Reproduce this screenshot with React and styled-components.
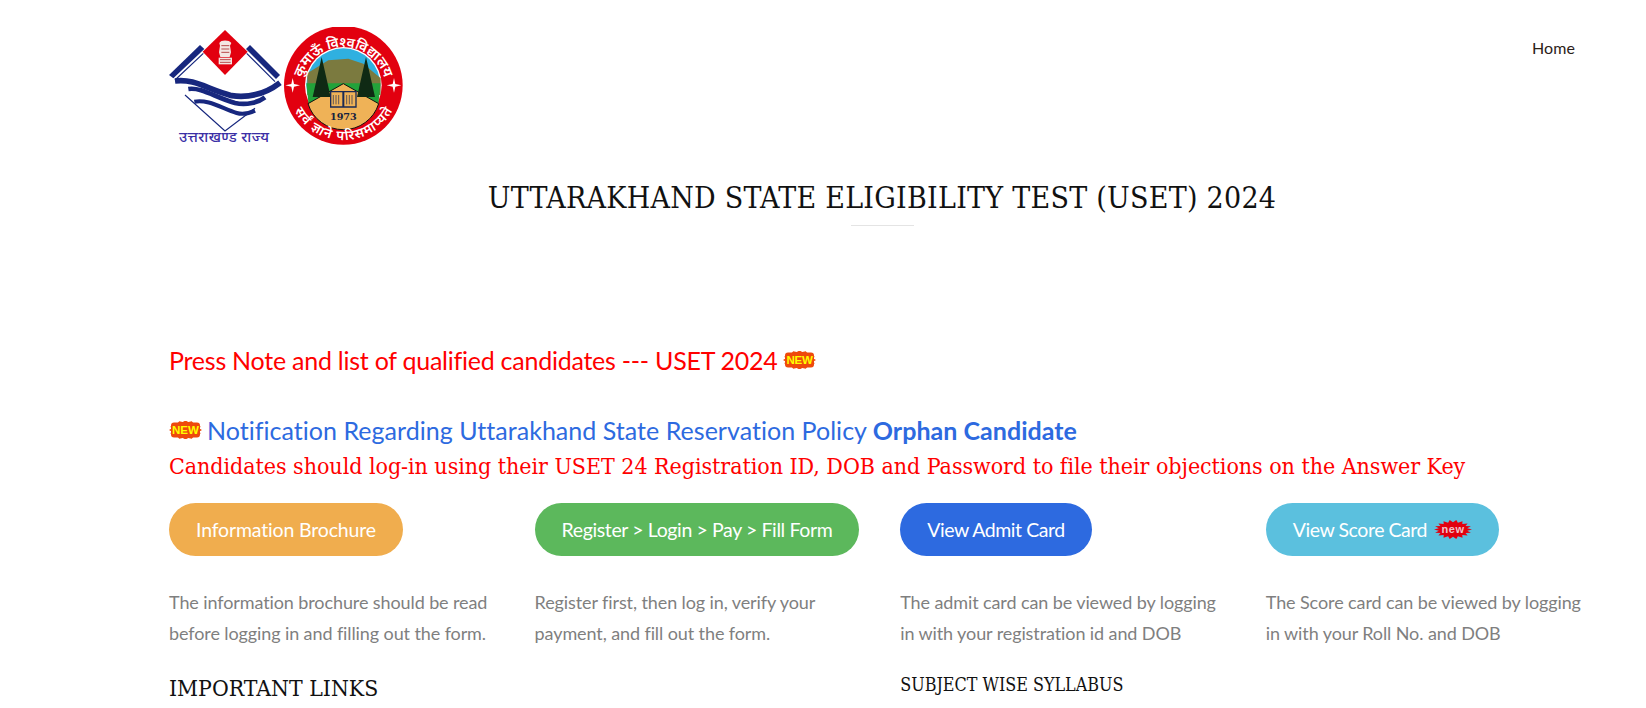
import React from 'react';
import styled, { createGlobalStyle } from 'styled-components';

const GlobalStyle = createGlobalStyle`
html, body { margin: 0; padding: 0; background: #fff; overflow: hidden; }
body { font-family: Lato, "Noto Sans", sans-serif; }
`;

const SLAB = '"DejaVu Serif Condensed", "DejaVu Serif", serif';

const Page = styled.div`
  width: 1646px;
  height: 708px;
  box-sizing: border-box;
  padding-left: 169px;
  overflow: hidden;
`;

const Header = styled.header`
  display: flex;
  justify-content: space-between;
  align-items: flex-start;
  height: 146px;
  padding: 27px 71px 0 0;
  box-sizing: border-box;
`;

const NavLink = styled.a`
  margin-top: 10px;
  font-size: 16px;
  line-height: 22px;
  letter-spacing: 0.1px;
  color: #2b2118;
`;

const TitleBlock = styled.div`
  width: 1426px;
  margin-top: 34px;
  text-align: center;
`;

const Title = styled.h2`
  margin: 0;
  font: 400 30px/36px ${SLAB};
  color: #111;
  letter-spacing: 0.25px;
`;

const Rule = styled.div`
  width: 63px;
  height: 1px;
  margin: 9px auto 0;
  background: #e4e4e4;
`;

const Notice = styled.p`
  display: flex;
  align-items: center;
  gap: 5px;
  margin: ${p => p.$top}px 0 0;
  font-size: 25px;
  line-height: 36px;
  letter-spacing: ${p => p.$track}px;
  color: ${p => p.$color};
`;

const SlabNotice = styled.p`
  margin: 0;
  font: 400 23px/36px ${SLAB};
  letter-spacing: -0.05px;
  white-space: nowrap;
  color: #f00;
`;

const Columns = styled.div`
  display: grid;
  grid-template-columns: repeat(4, 365.6px);
  margin-top: 19px;
`;

const Column = styled.div`
  padding-right: 36px;
`;

const Button = styled.a`
  display: inline-flex;
  align-items: center;
  gap: 7px;
  height: 53px;
  padding: 0 27px;
  border-radius: 27px;
  font-size: 19.5px;
  letter-spacing: ${p => p.$track ?? -0.45}px;
  white-space: nowrap;
  color: #fff;
  background: ${p => p.$bg};
`;

const Help = styled.p`
  margin: 31px 0 0;
  font-size: 18px;
  line-height: 31px;
  letter-spacing: -0.1px;
  color: #7f7f7f;
`;

const LinksHeading = styled.h3`
  margin: 24px 0 0;
  font: 400 22.8px/30px ${SLAB};
  color: #111;
`;

const SyllabusHeading = styled.h4`
  margin: 24px 0 0;
  font: 400 17.8px/24px ${SLAB};
  color: #111;
`;

const burst = (cx, cy, rx, ry, n, inner) => {
  const pts = [];
  for (let i = 0; i < n * 2; i++) {
    const a = (i * Math.PI) / n;
    const k = i % 2 ? inner : 1;
    pts.push(`${(cx + Math.cos(a) * rx * k).toFixed(1)},${(cy + Math.sin(a) * ry * k).toFixed(1)}`);
  }
  return pts.join(' ');
};

const NewBadge = () => (
  <svg width="33" height="18" viewBox="0 0 33 18">
    <rect x="2" y="1.5" width="29" height="15" rx="3" fill="#ee4a0c" />
    <polygon points={burst(16.5, 9, 16.5, 9.5, 16, 0.86)} fill="#ee4a0c" />
    <text x="16.5" y="13" textAnchor="middle" fontFamily="'Liberation Sans', sans-serif" fontWeight="700" fontSize="11.5" fill="#ff0">NEW</text>
  </svg>
);

const RedBadge = () => (
  <svg width="38" height="19" viewBox="0 0 38 19">
    <polygon points={burst(19, 9.5, 19, 9.5, 18, 0.76)} fill="#e2000f" />
    <text x="19" y="13" textAnchor="middle" fontFamily="'Liberation Sans', sans-serif" fontWeight="700" fontSize="11" letterSpacing="0.6" fill="#eec4cb">new</text>
  </svg>
);

// both emblems drawn in one svg, coordinates are 3x screen pixels
const Logos = () => (
  <svg width="237" height="120" viewBox="57 36 711 360">
    <polygon points="225,45 293,110 225,180 158,110" fill="#e2000f" />
    <path d="M208 84c4-10 30-10 36 0l-4 8 3 20-4 14h-28l-4-14 3-20z" fill="#f3e6e2" />
    <path d="M206 128h40v20h-40z" fill="#f3e6e2" />
    <path d="M214 92h24M214 102h24M214 112h24M210 134h32M210 142h32" stroke="#b84a4a" strokeWidth="3" />
    <polygon points="150,90 163,102 70,190 57,180" fill="#17277e" />
    <polygon points="300,90 390,180 378,192 288,102" fill="#17277e" />
    <path d="M160 115 75 195M290 115 375 200" stroke="#17277e" strokeWidth="3.5" fill="none" />
    <path d="M75 198C135 190 175 225 245 242C305 250 355 230 390 203" stroke="#17277e" strokeWidth="17" fill="none" />
    <path d="M115 222C155 216 195 247 255 264C290 272 325 262 345 247" stroke="#17277e" strokeWidth="14" fill="none" />
    <path d="M133 260C175 252 215 280 260 294C280 300 300 294 315 287" stroke="#17277e" strokeWidth="12" fill="none" />
    <path d="M105 240 225 348 315 280" stroke="#17277e" strokeWidth="3.5" fill="none" />
    <text x="222" y="380" textAnchor="middle" textLength="270" fontFamily="'Noto Sans', 'Noto Sans Devanagari', sans-serif" fontWeight="500" fontSize="44" fill="#3b2fa6">उत्तराखण्ड राज्य</text>

    <circle cx="580" cy="211" r="178" fill="#e2000f" />
    <circle cx="580" cy="211" r="115" fill="#fff" />
    <circle cx="580" cy="211" r="111" fill="#2fb0e0" />
    <path d="M472 175 535 136 595 131 640 146 692 190V240H472Z" fill="#7b7a3f" />
    <path d="M469 205H691L685 270H476Z" fill="#22a23a" />
    <path d="M580 206 686 266A111 111 0 0 1 474 266Z" fill="#efb257" stroke="#111" strokeWidth="3" />
    <path d="M515 126 488 246H542ZM648 126 621 246H675Z" fill="#0f2a14" />
    <path d="M542 230h37v46h-37zM581 230h37v46h-37z" fill="#efb257" stroke="#1a2a55" strokeWidth="4" />
    <path d="M550 240v28M558 240v28M566 240v28M590 240v28M598 240v28M606 240v28" stroke="#1a2a55" strokeWidth="2" />
    <text x="580" y="316" textAnchor="middle" textLength="80" fontFamily="'DejaVu Serif', serif" fontWeight="700" fontSize="29" fill="#16213f">1973</text>
    <path d="M428 189 432 207 450 211 432 215 428 233 424 215 406 211 424 207ZM732 189 736 207 754 211 736 215 732 233 728 215 710 211 728 207Z" fill="#fff" />
    <path id="arcTop" d="M456 256A128 128 0 1 1 704 256" fill="none" />
    <path id="arcBottom" d="M417 241A166 166 0 0 0 743 241" fill="none" />
    <text fontFamily="'Noto Sans', sans-serif" fontWeight="600" fontSize="42" fill="#fff">
      <textPath href="#arcTop" startOffset="50%" textAnchor="middle" textLength="330">कुमाऊँ विश्वविद्यालय</textPath>
    </text>
    <text fontFamily="'Noto Sans', sans-serif" fontWeight="600" fontSize="40" fill="#fff">
      <textPath href="#arcBottom" startOffset="50%" textAnchor="middle" textLength="360">सर्वं ज्ञाने परिसमाप्यते</textPath>
    </text>
  </svg>
);

const App = () => (
  <>
    <GlobalStyle />
    <Page>
      <Header>
        <Logos />
        <NavLink>Home</NavLink>
      </Header>
      <TitleBlock>
        <Title>UTTARAKHAND STATE ELIGIBILITY TEST (USET) 2024</Title>
        <Rule />
      </TitleBlock>
      <Notice $top={116} $color="#f00" $track={-0.25}>Press Note and list of qualified candidates --- USET 2024 <NewBadge /></Notice>
      <Notice $top={34} $color="#2d6ae0" $track={0.03}><NewBadge /><span>Notification Regarding Uttarakhand State Reservation Policy <b>Orphan Candidate</b></span></Notice>
      <SlabNotice>Candidates should log-in using their USET 24 Registration ID, DOB and Password to file their objections on the Answer Key</SlabNotice>
      <Columns>
        <Column>
          <Button $bg="#f0ad4e" $track={-0.16}>Information Brochure</Button>
          <Help>The information brochure should be read before logging in and filling out the form.</Help>
          <LinksHeading>IMPORTANT LINKS</LinksHeading>
        </Column>
        <Column>
          <Button $bg="#5cb85c" $track={-0.38}>{'Register > Login > Pay > Fill Form'}</Button>
          <Help>Register first, then log in, verify your payment, and fill out the form.</Help>
        </Column>
        <Column>
          <Button $bg="#2d6ae0">View Admit Card</Button>
          <Help>The admit card can be viewed by logging in with your registration id and DOB</Help>
          <SyllabusHeading>SUBJECT WISE SYLLABUS</SyllabusHeading>
        </Column>
        <Column>
          <Button $bg="#5bc0de">View Score Card <RedBadge /></Button>
          <Help>The Score card can be viewed by logging in with your Roll No. and DOB</Help>
        </Column>
      </Columns>
    </Page>
  </>
);

export default App;
